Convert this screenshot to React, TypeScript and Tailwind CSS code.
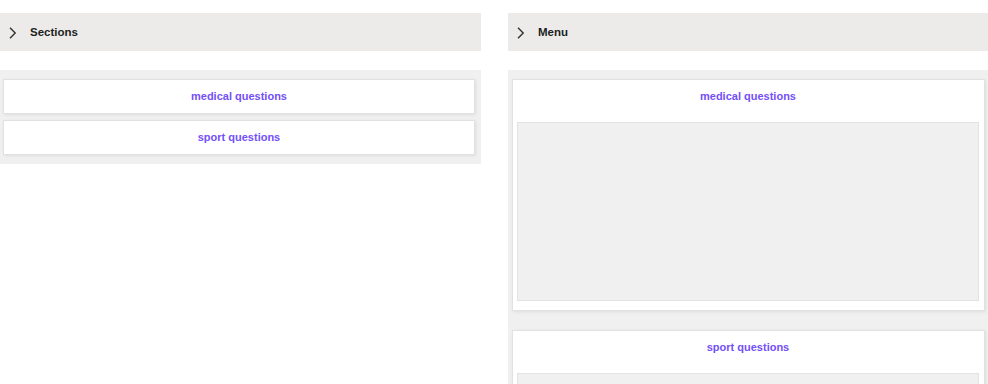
import React from 'react';

const font = { fontFamily: '"Liberation Sans", Arial, sans-serif' };

// Small chevron used in the section headers
const Chevron = () => (
  <svg width="8" height="12" viewBox="0 0 8 12" className="shrink-0">
    <path d="M1 0.8 L6.2 6 L1 11.2" fill="none" stroke="#323130" strokeWidth="1.4" />
  </svg>
);

const Header = ({ title }: { title: string }) => (
  <div className="flex h-[38px] shrink-0 items-center gap-[13px] bg-[#edebe9] pl-[9px] pt-[1px]">
    <Chevron />
    <span className="text-[11.5px] font-bold text-[#201f1e]">{title}</span>
  </div>
);

const Link = ({ label }: { label: string }) => (
  <span className="text-[11px] font-bold text-[#7450f7]">{label}</span>
);

const sections = ['medical questions', 'sport questions'];

export default function App() {
  return (
    <div className="flex h-[384px] w-[988px] gap-[27px] overflow-hidden bg-white pt-[13px]" style={font}>
      {/* left column: compact list */}
      <div className="flex w-[481px] shrink-0 flex-col gap-[19px]">
        <Header title="Sections" />
        <div className="flex shrink-0 flex-col gap-[6px] bg-[#f0f0f0] pb-[9px] pl-[3px] pr-[6px] pt-[9px]">
          {sections.map((s) => (
            <div
              key={s}
              className="flex h-[35px] items-center justify-center border border-[#e1e1e1] bg-white shadow-[1px_1px_3px_rgba(0,0,0,0.08)]"
            >
              <Link label={s} />
            </div>
          ))}
        </div>
      </div>

      {/* right column: expanded menu */}
      <div className="flex w-[480px] shrink-0 flex-col gap-[19px]">
        <Header title="Menu" />
        <div className="flex shrink-0 flex-col gap-[19px] bg-[#f0f0f0] pb-[9px] pl-[4px] pr-[3px] pt-[9px]">
          {sections.map((s) => (
            <div
              key={s}
              className="flex shrink-0 flex-col border border-[#e1e1e1] bg-white pb-[9px] pl-[4px] pr-[5px] shadow-[1px_1px_3px_rgba(0,0,0,0.08)]"
            >
              <div className="flex h-[42px] items-center justify-center pb-[9px]">
                <Link label={s} />
              </div>
              <div className="h-[179px] border border-[#e3e3e3] bg-[#f0f0f0]" />
            </div>
          ))}
        </div>
      </div>
    </div>
  );
}
